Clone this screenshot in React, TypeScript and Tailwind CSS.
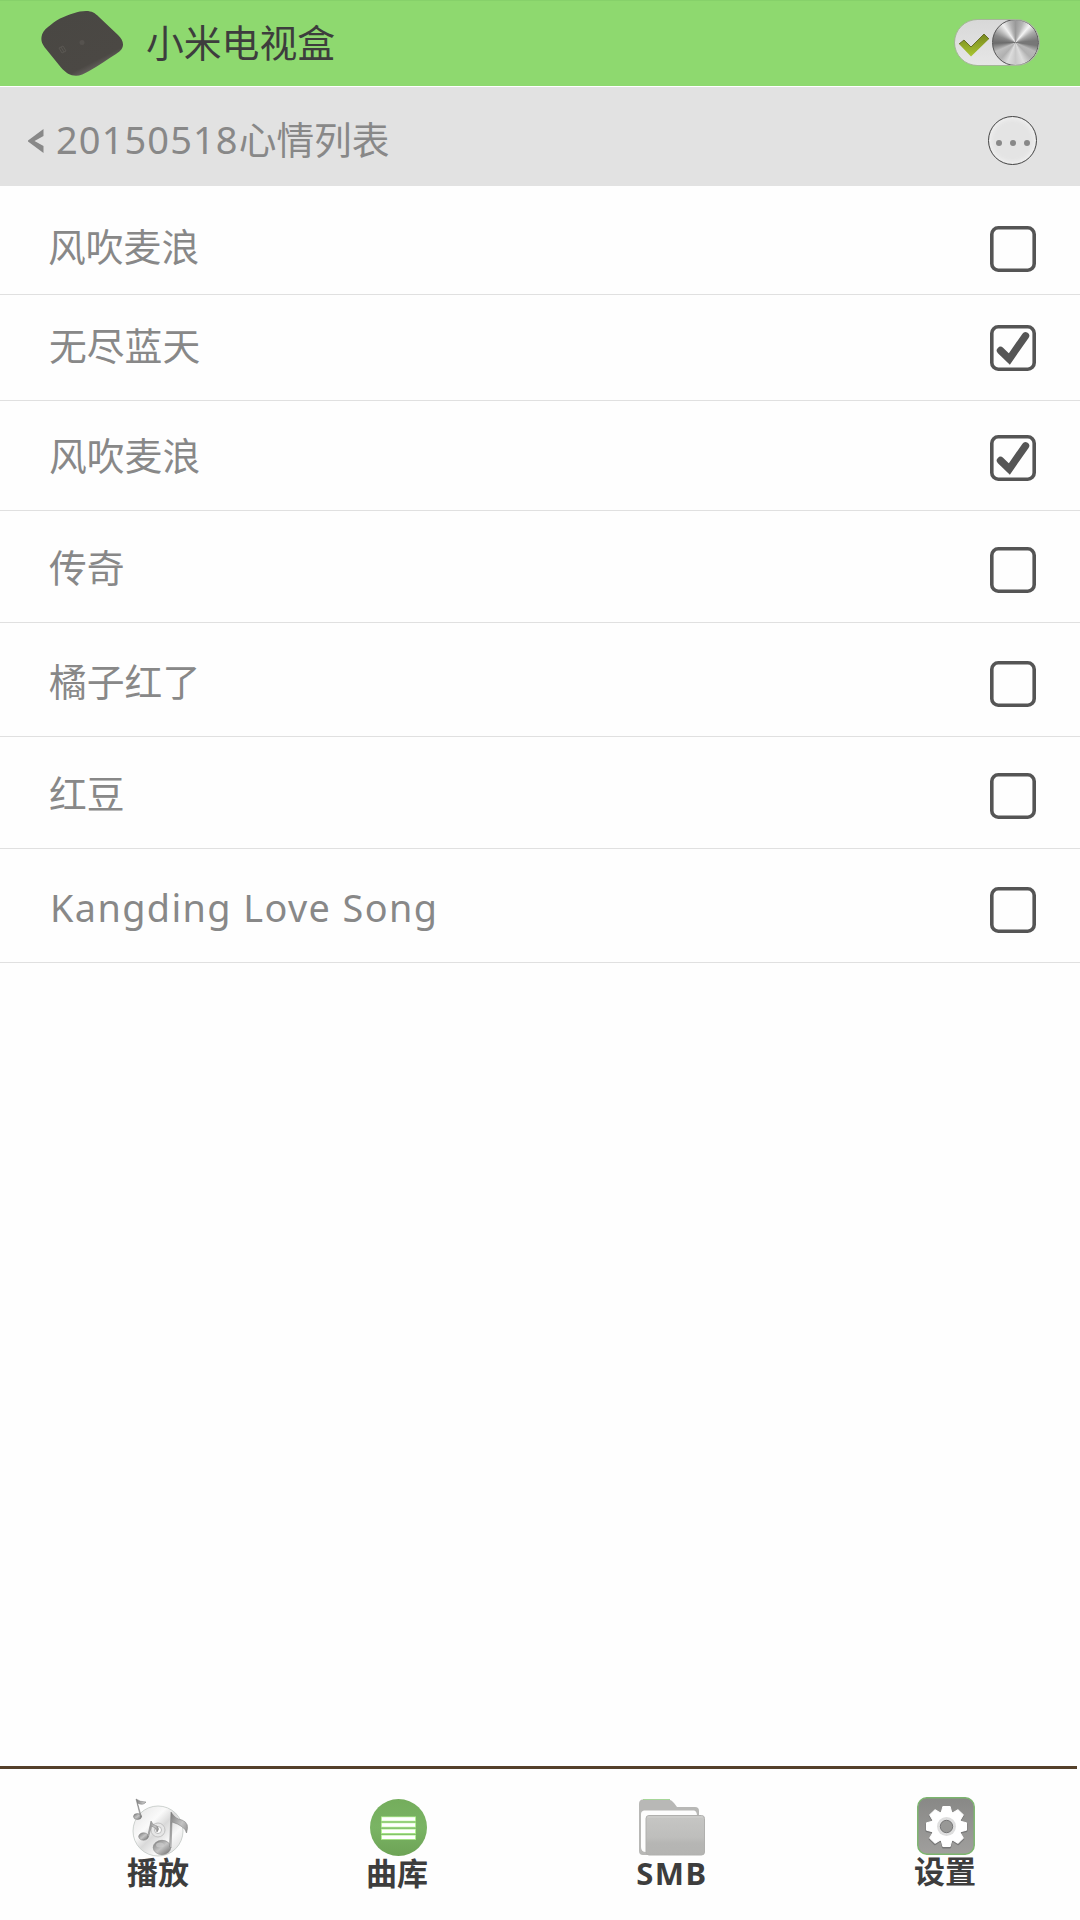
import React from 'react';

type Song = { title: string; checked: boolean; row: string; text: string };

const songs: Song[] = [
  { title: '风吹麦浪', checked: false, row: 'h-[109px] pt-10', text: 'ml-12' },
  { title: '无尽蓝天', checked: true, row: 'h-[106px] pt-[30px]', text: 'ml-[49px]' },
  { title: '风吹麦浪', checked: true, row: 'h-[110px] pt-[34px]', text: 'ml-[49px]' },
  { title: '传奇', checked: false, row: 'h-[112px] pt-9', text: 'ml-[49px]' },
  { title: '橘子红了', checked: false, row: 'h-[114px] pt-[38px]', text: 'ml-[49px]' },
  { title: '红豆', checked: false, row: 'h-[112px] pt-9', text: 'ml-[49px]' },
  { title: 'Kangding Love Song', checked: false, row: 'h-[114px] pt-[38px]', text: 'ml-[50px] tracking-[1.400px]' },
];

function TvBox() {
  return (
    <svg className="ml-10 h-[68px] w-[84px]" viewBox="40 8 84 68">
      <defs>
        <linearGradient id="box" x1="0.2" y1="0.1" x2="0.75" y2="0.95">
          <stop offset="0" stopColor="#494743" />
          <stop offset="0.8" stopColor="#4b4844" />
          <stop offset="0.93" stopColor="#686461" />
          <stop offset="1" stopColor="#a09e98" />
        </linearGradient>
      </defs>
      <path d="M60 17.500C70 13 78 10.200 86 10C92 10 95 12 99 16L118 34C121 37 123 40 123 43.500C123 47 121 50 116 53C108 58 98 65 90 69.500C84 73 80 74.700 76 74.700C70 74.700 66 72 61 66.500L46 48C42 43 41 40 41.500 36C42 32 44 29 48 26C52 23 55 20 60 17.500Z" fill="url(#box)" />
      <circle cx="82" cy="41.500" r="2.500" fill="#55524e" />
      <path d="M59 47l4-2 3 5-4 2zM61 46l3 5" fill="none" stroke="#5d5a56" strokeWidth="0.800" />
    </svg>
  );
}

function PowerSwitch() {
  return (
    <div className="relative mr-10 h-[47px] w-[86px] overflow-hidden rounded-full border border-[#a5b698] bg-linear-to-b from-[#d8d8d8] to-[#e6e6e6]">
      <svg className="absolute top-[14px] left-1 h-6 w-8" viewBox="0 0 32 24">
        <defs>
          <linearGradient id="tick" x1="0" y1="0" x2="0" y2="1">
            <stop offset="0" stopColor="#78871f" />
            <stop offset="1" stopColor="#a9c631" />
          </linearGradient>
        </defs>
        <path d="M0 10L5 6L12 13L25 0L30 5L12 22.500Z" fill="url(#tick)" />
        <path d="M0 10L5 6L12 13L25 0L30 5" fill="none" stroke="#66702a" strokeWidth="1" />
      </svg>
      <div className="absolute -top-px right-0 size-[47px] rounded-full border border-[#555] bg-[conic-gradient(#999,#b5b5b5_20deg,#f4f4f4_40deg,#aaa_60deg,#777_85deg,#777_98deg,#b8b8b8_115deg,#b0b0b0_135deg,#ddd_158deg,#c8c8c8_180deg,#ddd_202deg,#b0b0b0_222deg,#c0c0c0_245deg,#6c6c6c_268deg,#8a8a8a_290deg,#f0f0f0_325deg,#b5b5b5_345deg,#999)]" />
    </div>
  );
}

function CheckBox({ checked }: { checked: boolean }) {
  return (
    <svg className="mr-11 size-[46px]" viewBox="0 0 46 46">
      <rect x="1.800" y="1.800" width="42.400" height="42.400" rx="6.500" fill="none" stroke="#555" strokeWidth="3.600" />
      {checked && <path d="M10.500 25.500L19.300 34L35.500 10.800" fill="none" stroke="#555" strokeWidth="7.400" strokeLinecap="round" />}
    </svg>
  );
}

function DiscIcon() {
  return (
    <svg className="h-[60px] w-[58px]" viewBox="132 1797 58 60">
      <defs>
        <linearGradient id="disc" x1="0" y1="0" x2="1" y2="1">
          <stop offset="0" stopColor="#e2e2e2" />
          <stop offset="0.35" stopColor="#fafafa" />
          <stop offset="0.5" stopColor="#d9d9d9" />
          <stop offset="0.7" stopColor="#f8f8f8" />
          <stop offset="1" stopColor="#d5d5d5" />
        </linearGradient>
        <linearGradient id="note" x1="0" y1="0" x2="1" y2="1">
          <stop offset="0" stopColor="#777" />
          <stop offset="0.5" stopColor="#c4c4c4" />
          <stop offset="1" stopColor="#686868" />
        </linearGradient>
      </defs>
      <circle cx="158" cy="1831" r="25" fill="url(#disc)" stroke="#c1c8c4" strokeWidth="0.800" />
      <circle cx="158" cy="1830" r="7" fill="#e6e6e6" stroke="#c1c1c1" />
      <circle cx="158" cy="1830" r="3.500" fill="#fff" stroke="#bbb" />
      <g fill="url(#note)" stroke="#777" strokeWidth="0.500">
        <ellipse cx="137.500" cy="1816.500" rx="4" ry="3" />
        <path d="M140.500 1817L136 1799Q140 1802 146 1802Q143 1806 137.500 1803L141.500 1817Z" />
        <ellipse cx="143.500" cy="1836.500" rx="4.800" ry="3.700" />
        <path d="M147.500 1837L151 1821Q153 1826 157 1826Q160 1829 157 1832Q156 1827 151.500 1826L148.500 1837Z" />
        <ellipse cx="162" cy="1847.500" rx="8.800" ry="7.200" />
        <path d="M169.500 1847L171 1812Q175 1819 182 1820Q190 1823 186.500 1833Q185 1826 172 1822L171 1848Z" />
      </g>
      <ellipse cx="160" cy="1845" rx="4" ry="2.500" fill="#ccc" opacity="0.700" />
    </svg>
  );
}

function LibraryIcon() {
  return (
    <svg className="size-[57px]" viewBox="0 0 57 57">
      <defs>
        <linearGradient id="lib" x1="0" y1="0" x2="0" y2="1">
          <stop offset="0" stopColor="#74ad5c" />
          <stop offset="0.5" stopColor="#7ab464" />
          <stop offset="1" stopColor="#6da356" />
        </linearGradient>
      </defs>
      <circle cx="28.500" cy="28.500" r="28.500" fill="url(#lib)" />
      <path d="M11 20H46M11 26H46M11 32.200H46M11 38.200H46" stroke="#b4f293" strokeWidth="5" />
      <path d="M12 20H45M12 26H45M12 32.200H45M12 38.200H45" stroke="#fff" strokeWidth="3.400" />
    </svg>
  );
}

function FolderIcon() {
  return (
    <svg className="h-[57px] w-[67px]" viewBox="0 0 67 57">
      <defs>
        <linearGradient id="folder" x1="0" y1="0" x2="0" y2="1">
          <stop offset="0" stopColor="#c6c6c4" />
          <stop offset="0.550" stopColor="#bebebc" />
          <stop offset="0.700" stopColor="#b6b6b4" />
          <stop offset="1" stopColor="#b4b4b2" />
        </linearGradient>
      </defs>
      <path d="M4 0.500H30Q33 1 35 4L38 8H56Q60 8 60 12V22H10V56H4Q0 56 0 52V5Q0 0.500 4 0.500Z" fill="#b8b8b6" />
      <path d="M4 0.500H31" stroke="#a6d699" strokeWidth="1" />
      <path d="M5 11.500H55Q58 12 58 17V22H7V53Q2 53 2 48V15Q2 12 5 11.500Z" fill="#fdfdfd" />
      <rect x="7" y="16.500" width="58.500" height="39.500" rx="3" fill="url(#folder)" stroke="#b0b0ae" />
      <path d="M8.500 18H64" stroke="#d2d2d0" strokeWidth="1" />
    </svg>
  );
}

const teeth = [0, 45, 90, 135, 180, 225, 270, 315];

function SettingsIcon() {
  return (
    <svg className="size-[58px]" viewBox="0 0 58 58">
      <defs>
        <linearGradient id="tile" x1="0" y1="0" x2="0" y2="1">
          <stop offset="0" stopColor="#888886" />
          <stop offset="1" stopColor="#a09f9d" />
        </linearGradient>
      </defs>
      <rect x="0.800" y="0.800" width="56.400" height="56.400" rx="9" fill="url(#tile)" stroke="#7cb56e" strokeWidth="1.500" />
      <g transform="translate(29.500 30.500)" fill="none" stroke="#777" strokeLinejoin="round">
        <circle r="15.500" fill="#777" />
        {teeth.map((a) => <path key={a} d="M-5.500 -13L-4 -20.500H4L5.500 -13Z" fill="#777" transform={`rotate(${a})`} />)}
      </g>
      <g transform="translate(29.500 29.500)" fill="#fff" stroke="#fff" strokeLinejoin="round">
        <circle r="15" />
        {teeth.map((a) => <path key={a} d="M-5.500 -13L-3.700 -20H3.700L5.500 -13Z" transform={`rotate(${a})`} />)}
        <circle r="9.500" fill="#dedede" stroke="none" />
        <circle r="6.200" fill="#989896" stroke="#777" />
      </g>
    </svg>
  );
}

export default function App() {
  return (
    <div className="flex h-[1920px] w-[1080px] flex-col overflow-hidden bg-[#fefefe] font-['Noto_Sans','Noto_Sans_CJK_SC',sans-serif] text-[38px] leading-[46px] text-[#888]">
      <header className="flex h-[87px] items-center border-b border-white bg-[#8ed96f] pb-px text-[#3d3d3d] shadow-[inset_0_1px_0_#86d16a]">
        <TvBox />
        <h1 className="ml-[22px] flex-1 pb-1 font-['Noto_Sans_CJK_SC',sans-serif] text-[37.8px]">小米电视盒</h1>
        <PowerSwitch />
      </header>

      <div className="flex h-[99px] items-center bg-[#e2e2e2] pt-2">
        <svg className="ml-7 h-6 w-4" viewBox="0 0 16 24">
          <path d="M15.500 0V7L6.500 12L15.500 17V24L0 12.500V11.500Z" fill="#888" />
        </svg>
        <h2 className="ml-3 flex flex-1 items-center pb-1">
          <span className="tracking-[1.100px]">20150518</span>
          <span className="pt-0.5 text-[37.700px]">心情列表</span>
        </h2>
        <button className="mr-[43px] flex size-[49px] items-center justify-center gap-2 rounded-full border border-[#444] bg-[#e4e4e4] pt-1 shadow-[inset_0_0_4px_2px_#f0f0f0]">
          <i className="size-1.5 rounded-full bg-[#888]" />
          <i className="size-1.5 rounded-full bg-[#888]" />
          <i className="size-1.5 rounded-full bg-[#888]" />
        </button>
      </div>

      <ul className="flex-1">
        {songs.map((s, i) => (
          <li key={i} className={`flex items-start justify-between border-b border-[#e0e0e0] ${s.row}`}>
            <span className={`-mt-0.5 text-[37.800px] ${s.text}`}>{s.title}</span>
            <CheckBox checked={s.checked} />
          </li>
        ))}
      </ul>

      <div className="h-[3px] w-[1077px] bg-[#54402a]" />
      <nav className="flex h-[151px] items-start text-[31px] leading-8 font-bold text-[#3d3d3d]">
        <a className="ml-[127px] flex w-[62px] flex-col items-center pt-7">
          <span className="ml-1.5"><DiscIcon /></span>
          <span className="-mt-px">播放</span>
        </a>
        <a className="ml-[177px] flex w-[62px] flex-col items-center pt-[30px]">
          <span className="ml-0.5"><LibraryIcon /></span>
          <span className="mt-px">曲库</span>
        </a>
        <a className="ml-[205px] flex w-[78px] flex-col items-center pt-[30px]">
          <FolderIcon />
          <span className="mt-px tracking-[1.500px]">SMB</span>
        </a>
        <a className="ml-[203px] flex w-[62px] flex-col items-center pt-7">
          <span className="ml-0.5"><SettingsIcon /></span>
          <span>设置</span>
        </a>
      </nav>
    </div>
  );
}
